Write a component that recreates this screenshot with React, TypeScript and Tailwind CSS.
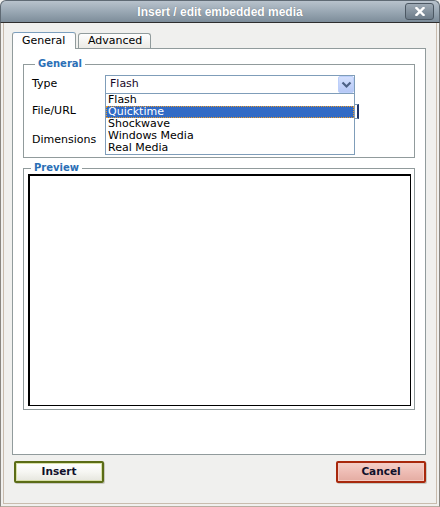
import React from "react";

const items = ["Flash", "Quicktime", "Shockwave", "Windows Media", "Real Media"];

function Legend({ children }: { children: React.ReactNode }) {
  return (
    <legend className="ml-[3px] px-[3px] text-[10px] leading-[12px] font-bold text-[#2b6fb6]">
      {children}
    </legend>
  );
}

export default function App() {
  return (
    <div className="w-[440px] h-[507px] flex flex-col font-['DejaVu_Sans',Verdana,sans-serif] text-[11px] text-black bg-[#f0f0ee]">
      {/* Title bar */}
      <div className="relative h-[23px] shrink-0 rounded-t-[6px] bg-gradient-to-b from-[#b8c2cc] via-[#9aa8b4] to-[#7d8d9a] border border-[#5f6a74] border-b-[#2e2e2e] flex items-center justify-center">
        <span className="font-['Liberation_Sans',Arial,sans-serif] font-bold text-[12px] text-white [text-shadow:0_0_1px_rgba(60,70,80,0.6)]">
          Insert / edit embedded media
        </span>
        <div className="absolute right-[5px] top-[2px] w-[29px] h-[17px] rounded-[3px] border border-[#4c5863] bg-gradient-to-b from-[#9eaab5] to-[#6d7c89] flex items-center justify-center">
          <svg width="10" height="9" viewBox="0 0 10 9">
            <path d="M1.5 1 L8.5 8 M8.5 1 L1.5 8" stroke="white" strokeWidth="2.4" strokeLinecap="square" />
          </svg>
        </div>
      </div>

      {/* Body frame */}
      <div className="flex-1 flex flex-col border-x border-b border-x-[#8a8680] border-b-[#b8ada0] px-[2px] pb-[2px]">
        <div className="flex-1 flex flex-col border-x border-b border-[#c9bcae] px-[8px] pt-[9px]">
          {/* Tabs */}
          <div className="flex items-end gap-[2px] h-[16px] relative z-10">
            <div className="h-[17px] -mb-px w-[64px] rounded-t-[3px] border border-b-0 border-[#919b9c] border-t-[#7b9ebd] bg-gradient-to-b from-[#fcfcfe] to-white flex items-center pl-[9px]">
              General
            </div>
            <div className="h-[15px] w-[73px] rounded-t-[3px] border border-b-0 border-[#919b9c] bg-gradient-to-b from-[#fefefe] to-[#ecebe6] flex items-center pl-[9px] pt-[1px]">
              Advanced
            </div>
          </div>

          {/* Panel */}
          <div className="h-[407px] w-[414px] border border-[#919b9c] bg-white px-[10px] pt-[9px] flex flex-col">
            <fieldset className="border border-[#919b9c] pl-[8px] pr-[2px] pb-[8px] relative">
              <Legend>General</Legend>
              <div className="mt-[5px] h-[19px] flex items-center relative">
                <span className="w-[73px]">Type</span>
                <div className="relative w-[250px] h-[19px] border border-[#7f9db9] bg-white flex items-center pl-[4px] text-[#1a0a2a]">
                  Flash
                  <div className="absolute right-0 top-0 w-[16px] h-[17px] rounded-[2px] border border-[#bccffa] bg-gradient-to-b from-[#d4e0fd] to-[#b6c8f6] flex items-center justify-center">
                    <svg width="11" height="8" viewBox="0 0 11 8">
                      <path d="M1.5 1.5 L5.5 5.5 L9.5 1.5" stroke="#4d6185" strokeWidth="2.2" fill="none" />
                    </svg>
                  </div>
                  {/* open list */}
                  <div className="absolute left-[-1px] top-[17px] w-[250px] border border-[#7f9db9] bg-white z-20 flex flex-col py-0">
                    {items.map((it) => (
                      <div
                        key={it}
                        className={
                          it === "Quicktime"
                            ? "h-[12px] leading-[10px] pl-[1px] bg-[#316ac5] text-white border border-dotted border-[#e89a2c]"
                            : "h-[12px] leading-[12px] pl-[2px] text-black"
                        }
                      >
                        {it}
                      </div>
                    ))}
                  </div>
                </div>
              </div>
              <div className="mt-[9px] h-[17px] flex items-center">
                <span className="w-[73px]">File/URL</span>
                <div className="w-[254px] h-[15px] border border-[#7f9db9] border-r-[#1f3466] border-r-2 bg-white" />
              </div>
              <div className="mt-[12px] h-[17px] flex items-center">
                <span className="w-[73px]">Dimensions</span>
              </div>
            </fieldset>

            <fieldset className="mt-[4px] border border-[#919b9c] pl-[4px] pr-[3px] pb-[3px]">
              <Legend>Preview</Legend>
              <div className="h-[232px] border-t-2 border-l-2 border-r border-b border-black bg-white" />
            </fieldset>
          </div>

          {/* Buttons */}
          <div className="mt-[6px] flex justify-between px-[2px]">
            <button className="w-[90px] h-[22px] rounded-[2px] border-2 border-[#5b6c16] bg-gradient-to-b from-white via-[#f6f6f2] to-[#e6e6de] shadow-[inset_0_0_0_1px_#d8e0a8,1px_1px_0_#c8c8c0] font-bold text-[10.5px] text-[#10102a] flex items-center justify-center">
              Insert
            </button>
            <button className="w-[90px] h-[22px] rounded-[2px] border-2 border-[#a8280c] bg-gradient-to-b from-[#f4d0c8] via-[#eebcb4] to-[#e4aca2] shadow-[inset_0_0_0_1px_#f4ccc4,1px_1px_0_#c8c8c0] font-bold text-[10.5px] text-[#10102a] flex items-center justify-center">
              Cancel
            </button>
          </div>
        </div>
      </div>
    </div>
  );
}
